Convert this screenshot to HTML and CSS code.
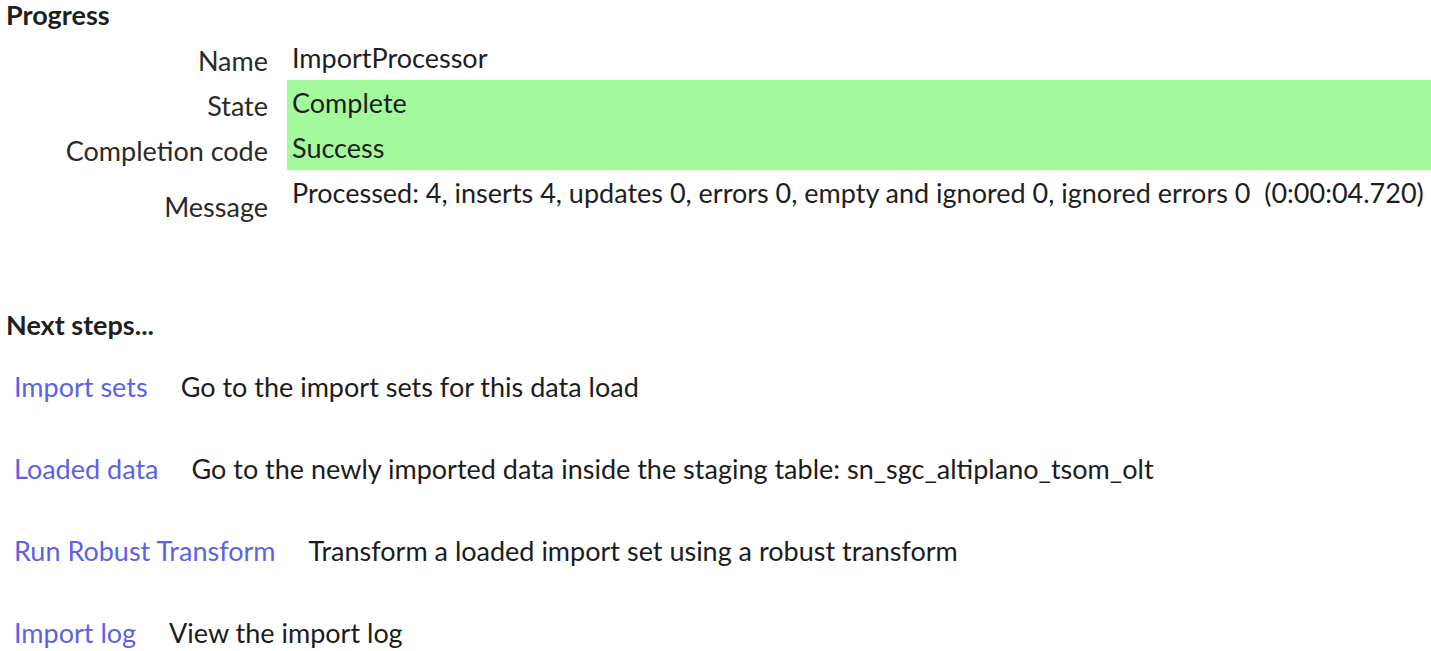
FILE: index.html
```html
<!DOCTYPE html>
<html>
<head>
<meta charset="utf-8">
<link rel="stylesheet" href="styles.css">
</head>
<body>
<div class="page">
  <h2 class="section-title">Progress</h2>
  <div class="progress">
    <div class="label">Name</div>
    <div class="value">ImportProcessor</div>
    <div class="label">State</div>
    <div class="value ok">Complete</div>
    <div class="label">Completion code</div>
    <div class="value ok">Success</div>
    <div class="label label-message">Message</div>
    <div class="value value-message">Processed: 4, inserts 4, updates 0, errors 0, empty and ignored 0, ignored errors 0&nbsp; (0:00:04.720)</div>
  </div>

  <h2 class="section-title next-title">Next steps...</h2>
  <div class="steps">
    <div class="step"><a class="step-link" href="#">Import sets</a><span class="step-desc">Go to the import sets for this data load</span></div>
    <div class="step"><a class="step-link" href="#">Loaded data</a><span class="step-desc">Go to the newly imported data inside the staging table: sn_sgc_altiplano_tsom_olt</span></div>
    <div class="step"><a class="step-link" href="#">Run Robust Transform</a><span class="step-desc">Transform a loaded import set using a robust transform</span></div>
    <div class="step"><a class="step-link" href="#">Import log</a><span class="step-desc">View the import log</span></div>
  </div>
</div>
</body>
</html>
```
FILE: styles.css
```css
html, body {
  margin: 0;
  padding: 0;
  background: #ffffff;
}
body {
  font-family: Lato, "Liberation Sans", sans-serif;
  font-size: 27px;
  color: #222222;
}
.page {
  padding: 0 0 0 6px;
}
.section-title {
  margin: 0;
  font-size: 27px;
  font-weight: 700;
  line-height: 30px;
  color: #1f1f1f;
}
.progress {
  display: grid;
  grid-template-columns: 262px 1fr;
  grid-template-rows: 45px 45px 45px 60px;
  column-gap: 19px;
  margin-top: 5px;
  line-height: 32px;
}
.label {
  text-align: right;
  padding-top: 10px;
  color: #2a2a2a;
  white-space: nowrap;
}
.value {
  padding: 7px 0 0 5px;
  color: #1e1e1e;
  white-space: nowrap;
}
.value.ok {
  background: #a5f99d;
}
.label-message {
  padding-top: 21px;
}
.next-title {
  margin-top: 80px;
}
.steps {
  display: flex;
  flex-direction: column;
  padding-left: 8px;
  margin-top: 31px;
  gap: 50px;
}
.step {
  display: flex;
  gap: 33px;
  line-height: 32px;
}
.step-link {
  color: #5c62e6;
  text-decoration: none;
}
.step-desc {
  color: #1c1c1c;
}
```
